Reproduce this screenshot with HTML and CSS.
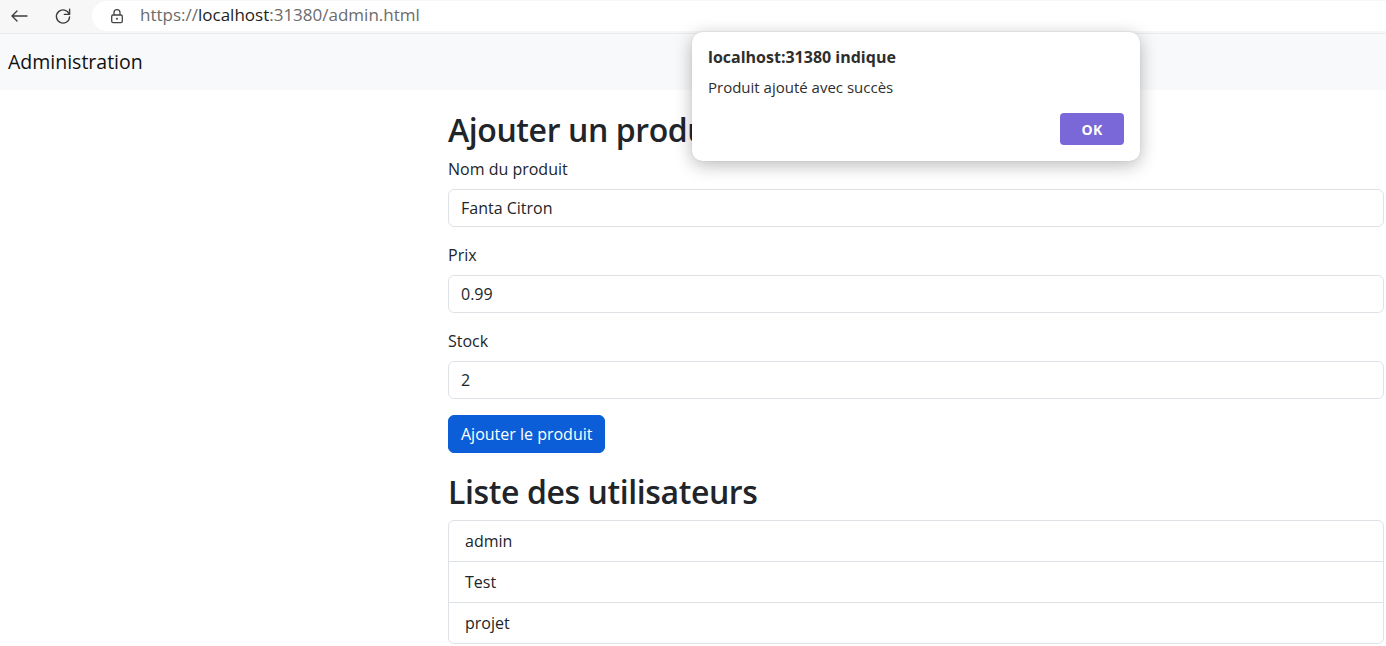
FILE: index.html
```html
<!DOCTYPE html>
<html lang="fr">
<head>
<meta charset="utf-8">
<title>Administration</title>
<link rel="stylesheet" href="styles.css">
</head>
<body>
<div class="toolbar">
  <span class="tb-icon back">
    <svg width="20" height="20" viewBox="0 0 20 20"><path d="M18 10H3 M8 5L3 10L8 15" fill="none" stroke="#3d3d3d" stroke-width="1.4" stroke-linecap="round" stroke-linejoin="round"/></svg>
  </span>
  <span class="tb-icon reload">
    <svg width="20" height="20" viewBox="0 0 20 20"><path d="M16.2 8.2A6.6 6.6 0 1 0 16.6 11" fill="none" stroke="#3d3d3d" stroke-width="1.4" stroke-linecap="round"/><path d="M16.6 3.2V8.4H11.4" fill="none" stroke="#3d3d3d" stroke-width="1.4" stroke-linecap="round" stroke-linejoin="round"/></svg>
  </span>
  <div class="urlbar">
    <span class="lock">
      <svg width="14" height="16" viewBox="0 0 14 16"><path d="M4 7V4.6A3 3 0 0 1 10 4.6V7" fill="none" stroke="#444" stroke-width="1.3"/><rect x="1.7" y="7" width="10.6" height="7.6" rx="1.4" fill="none" stroke="#444" stroke-width="1.3"/><circle cx="7" cy="10.8" r="1" fill="#444"/></svg>
    </span>
    <span class="url"><span class="dim">https://</span><span class="host">localhost</span><span class="dim">:31380/admin.html</span></span>
  </div>
</div>

<nav class="navbar">
  <span class="brand">Administration</span>
</nav>

<main class="main">
  <h2 class="heading">Ajouter un produit</h2>
  <form class="form">
    <div class="field">
      <label class="label" for="nom">Nom du produit</label>
      <input class="input" id="nom" type="text" value="Fanta Citron">
    </div>
    <div class="field">
      <label class="label" for="prix">Prix</label>
      <input class="input" id="prix" type="text" value="0.99">
    </div>
    <div class="field">
      <label class="label" for="stock">Stock</label>
      <input class="input" id="stock" type="text" value="2">
    </div>
    <button class="btn" type="button">Ajouter le produit</button>
  </form>

  <h2 class="heading heading-list">Liste des utilisateurs</h2>
  <ul class="list">
    <li class="list-item">admin</li>
    <li class="list-item">Test</li>
    <li class="list-item">projet</li>
  </ul>
</main>

<div class="dialog">
  <div class="dialog-title">localhost:31380 indique</div>
  <div class="dialog-msg">Produit ajouté avec succès</div>
  <div class="dialog-actions"><button class="dialog-ok" type="button">OK</button></div>
</div>
</body>
</html>
```

FILE: styles.css
```css
* { box-sizing: border-box; }

html, body {
  margin: 0;
  padding: 0;
  background: #fff;
  color: #212529;
  font-family: "Open Sans", "Noto Sans", "DejaVu Sans", sans-serif;
  font-size: 16px;
  line-height: 1.5;
  overflow: hidden;
}

.toolbar {
  height: 34px;
  background: #f7f7f7;
  border-bottom: 1px solid #ececec;
  display: flex;
  align-items: flex-start;
  padding-top: 1px;
}

.tb-icon {
  width: 20px;
  height: 20px;
  display: flex;
  margin-top: 5px;
}
.back { margin-left: 9px; }
.reload { margin-left: 24px; }

.urlbar {
  margin-left: 19px;
  flex: 1;
  height: 30px;
  background: #fff;
  border-radius: 15px 0 0 15px;
  display: flex;
  align-items: center;
  padding-left: 18px;
}
.lock { display: flex; width: 14px; height: 16px; margin-top: -1px; }
.url {
  margin-left: 16px;
  font-size: 17px;
  color: #6b6b6b;
  margin-top: -2px;
}
.url .host { color: #1d1d1d; }

.navbar {
  height: 56px;
  background: #f8f9fa;
  display: flex;
  align-items: center;
  padding-left: 8px;
}
.brand {
  font-size: 19.5px;
  line-height: 30px;
  color: #111;
}

.main {
  padding: 21px 2px 0 448px;
}

.heading {
  margin: 0 0 8px;
  font-size: 32px;
  font-weight: 600;
  letter-spacing: -0.4px;
  line-height: 1.2;
  color: #212529;
}
.heading-list { margin-top: 20px; }

.form { margin: 0; }

.field { margin-bottom: 16px; }

.label {
  display: block;
  margin-bottom: 8px;
  line-height: 24px;
}

.input {
  display: block;
  width: 100%;
  height: 38px;
  padding: 6px 12px;
  font: inherit;
  line-height: 24px;
  color: #212529;
  background: #fff;
  border: 1px solid #dee2e6;
  border-radius: 6px;
  outline: none;
}

.btn {
  display: inline-block;
  height: 38px;
  padding: 6px 12px;
  font: inherit;
  line-height: 24px;
  color: #fff;
  background: #0b5ed7;
  border: 1px solid #0b5ed7;
  border-radius: 6px;
}

.list {
  list-style: none;
  margin: 0;
  padding: 0;
  border: 1px solid #dee2e6;
  border-radius: 6px;
}
.list-item {
  padding: 8px 16px;
  line-height: 24px;
}
.list-item + .list-item { border-top: 1px solid #dee2e6; }

.dialog {
  position: absolute;
  left: 692px;
  top: 32px;
  width: 448px;
  height: 129px;
  background: #fff;
  border-radius: 10px;
  box-shadow: 0 4px 18px rgba(0, 0, 0, 0.28), 0 0 1px rgba(0, 0, 0, 0.2);
  padding: 13px 16px 0;
  color: #2e2e2e;
}
.dialog-title {
  font-weight: 700;
  font-size: 16px;
  line-height: 24px;
}
.dialog-msg {
  margin-top: 6px;
  font-size: 15px;
  line-height: 24px;
}
.dialog-actions {
  display: flex;
  justify-content: flex-end;
  margin-top: 14px;
}
.dialog-ok {
  width: 64px;
  height: 32px;
  border: none;
  border-radius: 4px;
  background: #7a67d8;
  color: #fff;
  font-family: inherit;
  font-weight: 700;
  font-size: 14px;
  letter-spacing: 0.3px;
}
```
